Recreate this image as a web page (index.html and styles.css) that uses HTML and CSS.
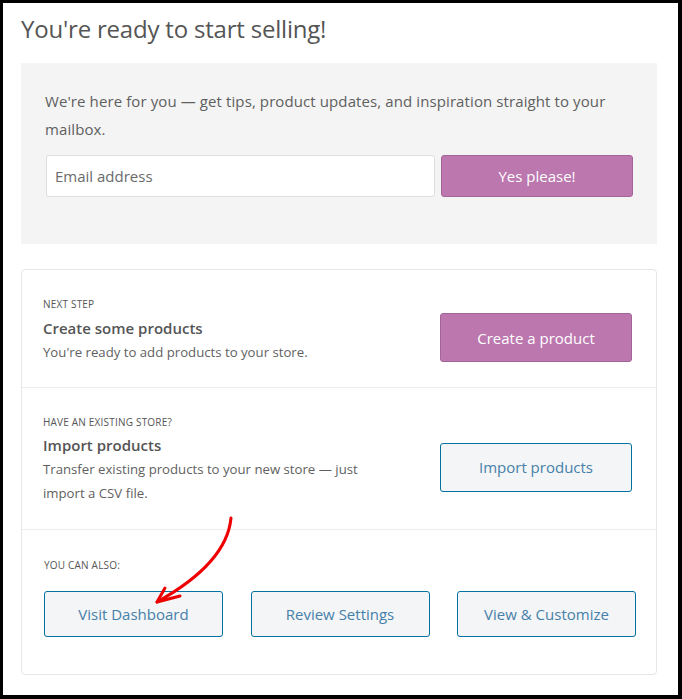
FILE: index.html
```html
<!DOCTYPE html>
<html lang="en">
<head>
<meta charset="utf-8">
<title>Ready to start selling</title>
<link rel="stylesheet" href="styles.css">
</head>
<body>
<div class="frame">
  <h1 class="title">You're ready to start selling!</h1>

  <section class="newsletter">
    <p class="newsletter-text">We're here for you — get tips, product updates, and inspiration straight to your mailbox.</p>
    <form class="newsletter-form">
      <input class="email" type="text" placeholder="Email address">
      <button class="btn btn-primary btn-yes" type="button">Yes please!</button>
    </form>
  </section>

  <section class="card">
    <div class="row row-first">
      <div class="label">NEXT STEP</div>
      <div class="row-body">
        <div class="row-text">
          <div class="row-title">Create some products</div>
          <div class="row-desc">You're ready to add products to your store.</div>
        </div>
        <button class="btn btn-primary btn-action" type="button">Create a product</button>
      </div>
    </div>
    <div class="row row-second">
      <div class="label">HAVE AN EXISTING STORE?</div>
      <div class="row-body">
        <div class="row-text">
          <div class="row-title">Import products</div>
          <div class="row-desc">Transfer existing products to your new store — just import a CSV file.</div>
        </div>
        <button class="btn btn-secondary btn-action" type="button">Import products</button>
      </div>
    </div>
    <div class="row row-last">
      <div class="label">YOU CAN ALSO:</div>
      <div class="also">
        <button class="btn btn-secondary btn-also" type="button">Visit Dashboard</button>
        <button class="btn btn-secondary btn-also" type="button">Review Settings</button>
        <button class="btn btn-secondary btn-also" type="button">View &amp; Customize</button>
      </div>
    </div>
  </section>

  <svg class="arrow" width="100" height="100" viewBox="0 0 100 100" aria-hidden="true">
    <path d="M91 8 C 88 40, 60 68, 17 92" fill="none" stroke="#ee0000" stroke-width="3" stroke-linecap="round"/>
    <path d="M25 78 L17 92 L40 86" fill="none" stroke="#ee0000" stroke-width="3" stroke-linecap="round" stroke-linejoin="round"/>
  </svg>
</div>
</body>
</html>
```

FILE: styles.css
```css
* { box-sizing: border-box; }

html, body {
  margin: 0;
  padding: 0;
  background: #000;
}

body {
  font-family: "Open Sans", "Noto Sans", sans-serif;
  color: #666;
}

.frame {
  position: relative;
  width: 675px;
  height: 692px;
  margin: 3px 0 0 3px;
  background: #fff;
  padding: 0 21px 0 18px;
  overflow: hidden;
}

.title {
  margin: 0;
  padding-top: 10px;
  height: 60px;
  font-size: 24px;
  line-height: 32px;
  font-weight: 400;
  color: #555;
  letter-spacing: -0.2px;
}

.newsletter {
  background: #f4f4f4;
  height: 181px;
  padding: 24px 24px 0 24px;
}

.newsletter-text {
  margin: 0;
  font-size: 15px;
  line-height: 28px;
  color: #5f5f5f;
  letter-spacing: 0.1px;
}

.newsletter-form {
  display: flex;
  gap: 6px;
  margin: 12px 0 0 1px;
}

.email {
  width: 389px;
  height: 42px;
  border: 1px solid #ddd;
  border-radius: 3px;
  background: #fff;
  padding: 0 8px;
  font-family: inherit;
  font-size: 15px;
  color: #666;
}

.email::placeholder { color: #6a6a6a; }

.btn {
  font-family: inherit;
  font-size: 15px;
  border-radius: 3px;
  cursor: pointer;
  padding: 0;
}

.btn-primary {
  background: #bb77ae;
  border: 1px solid #a36597;
  color: #fff;
}

.btn-secondary {
  background: #f3f5f6;
  border: 1px solid #0071a1;
  color: #4680aa;
}

.btn-yes {
  width: 192px;
  height: 42px;
}

.card {
  margin-top: 25px;
  border: 1px solid #e6e6e6;
  border-radius: 4px;
  background: #fff;
}

.row {
  padding: 26px 24px 23px 21px;
  border-top: 1px solid #ececec;
}

.row-first { border-top: 0; }

.row-second { padding-bottom: 24px; }

.row-last {
  padding: 27px 20px 37px 22px;
}

.label {
  font-size: 10px;
  line-height: 16px;
  color: #555;
  letter-spacing: 0.2px;
}

.row-body {
  display: flex;
  align-items: center;
  justify-content: space-between;
  margin-top: 3px;
}

.row-text { width: 340px; }

.row-title {
  font-size: 15px;
  line-height: 24px;
  font-weight: 600;
  color: #555;
}

.row-desc {
  font-size: 13.2px;
  line-height: 24px;
  color: #5f5f5f;
}

.btn-action {
  width: 192px;
  height: 49px;
  margin: -2px 0 2px;
}

.also {
  display: grid;
  grid-template-columns: repeat(3, 179px);
  column-gap: 27.5px;
  margin-top: 18px;
}

.btn-also {
  height: 46px;
}

.arrow {
  position: absolute;
  left: 137px;
  top: 507px;
  pointer-events: none;
}
```
